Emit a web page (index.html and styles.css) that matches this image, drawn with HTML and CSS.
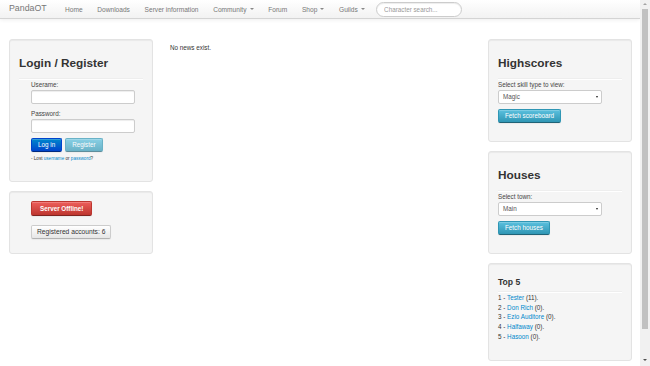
FILE: index.html
```html
<!DOCTYPE html>
<html lang="en">
<head>
  <meta charset="UTF-8">
  <meta name="viewport" content="width=device-width, initial-scale=1.0">
  <title>PandaOT</title>
  <link rel="stylesheet" href="styles.css">
</head>
<body>

  <div class="page">
    <!-- Top navigation -->
    <header class="navbar">
      <a class="brand" href="#">PandaOT</a>
      <nav class="nav-links">
        <a href="#">Home</a>
        <a href="#">Downloads</a>
        <a href="#">Server information</a>
        <a href="#">Community <span class="caret"></span></a>
        <a href="#">Forum</a>
        <a href="#">Shop <span class="caret"></span></a>
        <a href="#">Guilds <span class="caret"></span></a>
      </nav>
      <input class="search" type="text" placeholder="Character search...">
    </header>

    <div class="layout">
      <!-- Left column -->
      <aside class="sidebar">
        <div class="well">
          <h3>Login / Register</h3>
          <hr>
          <form class="login-form">
            <label>Userame:</label>
            <input class="field" type="text">
            <label>Password:</label>
            <input class="field" type="password">
            <div class="btn-row">
              <button class="btn btn-primary" type="button">Log in</button>
              <button class="btn btn-info btn-faded" type="button">Register</button>
            </div>
            <p class="lost">- Lost <a href="#">username</a> or <a href="#">password</a>?</p>
          </form>
        </div>

        <div class="well status">
          <div><button class="btn btn-danger" type="button">Server Offline!</button></div>
          <div><button class="btn btn-default" type="button">Registered accounts: 6</button></div>
        </div>
      </aside>

      <!-- News -->
      <main class="news">
        <p>No news exist.</p>
      </main>

      <!-- Right column -->
      <aside class="sidebar">
        <div class="well">
          <h3>Highscores</h3>
          <hr>
          <form class="side-form">
            <label>Select skill type to view:</label>
            <div class="select-box">Magic</div>
            <button class="btn btn-info" type="button">Fetch scoreboard</button>
          </form>
        </div>

        <div class="well">
          <h3>Houses</h3>
          <hr>
          <form class="side-form">
            <label>Select town:</label>
            <div class="select-box">Main</div>
            <button class="btn btn-info" type="button">Fetch houses</button>
          </form>
        </div>

        <div class="well">
          <h4>Top 5</h4>
          <hr>
          <ol class="top-list">
            <li>1 - <a href="#">Tester</a> (11).</li>
            <li>2 - <a href="#">Don Rich</a> (0).</li>
            <li>3 - <a href="#">Ezio Auditore</a> (0).</li>
            <li>4 - <a href="#">Halfaway</a> (0).</li>
            <li>5 - <a href="#">Hasoon</a> (0).</li>
          </ol>
        </div>
      </aside>
    </div>
  </div>

  <!-- Window scrollbar -->
  <div class="scrollbar">
    <span class="arrow arrow-up"></span>
    <span class="thumb"></span>
    <span class="arrow arrow-down"></span>
  </div>

</body>
</html>
```

FILE: styles.css
```css
body {
  font-family: 'Liberation Sans', Arial, sans-serif;
  font-size: 6.3px;
  line-height: 9.7px;
  color: #333;
  background: #fff;
  margin: 0;
  padding: 0;
  display: flex;
  height: 366px;
  overflow: hidden;
}

a {
  color: #0088cc;
  text-decoration: none;
}

.page {
  flex: 1;
  min-width: 0;
}

/* Navbar */
.navbar {
  display: flex;
  align-items: center;
  height: 18px;
  padding-left: 9px;
  background: linear-gradient(#ffffff, #f2f2f2);
  border-bottom: 1px solid #d4d4d4;
  box-shadow: 0 1px 4px rgba(0, 0, 0, 0.07);
}

.brand {
  font-size: 8.8px;
  color: #777;
  margin-right: 11px;
}

.nav-links {
  display: flex;
  padding-top: 1px;
}

.nav-links a {
  font-size: 6.6px;
  color: #777;
  padding: 0 7.35px;
  display: flex;
  align-items: center;
}

.caret {
  display: inline-block;
  width: 0;
  height: 0;
  margin-left: 3px;
  border-top: 2px solid #888;
  border-left: 2px solid transparent;
  border-right: 2px solid transparent;
}

.search {
  box-sizing: border-box;
  width: 86px;
  height: 15px;
  margin-left: 4px;
  padding: 0 7px;
  font-family: inherit;
  font-size: 6.3px;
  border: 1px solid #ccc;
  border-radius: 8px;
  background: #fff;
  box-shadow: inset 0 1px 1px rgba(0, 0, 0, 0.075);
}

.search::placeholder {
  color: #999;
}

/* Columns */
.layout {
  display: grid;
  grid-template-columns: 144px 1fr 144px;
  column-gap: 17px;
  padding: 20px 8px 0 9px;
}

.news {
  padding-top: 4px;
}

.news p {
  margin: 0;
}

/* Wells */
.well {
  background-color: #f5f5f5;
  border: 1px solid #e3e3e3;
  border-radius: 3px;
  box-shadow: inset 0 1px 1px rgba(0, 0, 0, 0.05);
  padding: 9px;
  margin-bottom: 9px;
}

.well h3 {
  font-size: 11.8px;
  line-height: 19px;
  margin: 5px 0 0;
  color: #333;
}

.well h4 {
  font-size: 8.6px;
  line-height: 8px;
  margin: 5px 0 0;
  color: #333;
}

.well hr {
  margin: 5px 0 0;
  border: 0;
  border-top: 1px solid #eee;
  border-bottom: 1px solid #fff;
}

label {
  display: block;
  line-height: 10px;
  color: #444;
}

.login-form {
  margin: 0 0 9px 12px;
}

.side-form {
  margin: 0 0 9px;
}

.field,
.select-box {
  display: block;
  box-sizing: border-box;
  width: 104px;
  height: 14px;
  margin: 0 0 5px;
  border: 1px solid #ccc;
  border-radius: 2px;
  background: #fff;
  box-shadow: inset 0 1px 1px rgba(0, 0, 0, 0.075);
}

.select-box {
  position: relative;
  padding-left: 4px;
  line-height: 12px;
  color: #555;
  box-shadow: none;
}

.select-box::after {
  content: "";
  position: absolute;
  right: 3px;
  top: 5px;
  border-top: 2px solid #222;
  border-left: 1.5px solid transparent;
  border-right: 1.5px solid transparent;
}

.btn-row {
  display: flex;
  gap: 3px;
}

/* Buttons */
.btn {
  height: 14px;
  padding: 0 6px;
  font-family: inherit;
  font-size: 6.3px;
  line-height: 12px;
  color: #fff;
  border: 1px solid rgba(0, 0, 0, 0.15);
  border-radius: 2px;
  cursor: pointer;
  box-shadow: inset 0 1px 0 rgba(255, 255, 255, 0.2), 0 1px 1px rgba(0, 0, 0, 0.05);
}

.btn-primary {
  background: linear-gradient(#0088cc, #0044cc);
  border-color: #0044cc #0044cc #002a80;
}

.btn-info {
  background: linear-gradient(#5bc0de, #2f96b4);
  border-color: #2f96b4 #2f96b4 #1f6377;
}

.btn-faded {
  opacity: 0.7;
}

.btn-danger {
  height: 15px;
  padding: 0 8px;
  font-weight: bold;
  background: linear-gradient(#ee5f5b, #bd362f);
  border-color: #bd362f #bd362f #802420;
}

.btn-default {
  padding: 0 5px;
  font-size: 6.7px;
  color: #333;
  background: linear-gradient(#ffffff, #e6e6e6);
  border-color: #ccc #ccc #b3b3b3;
}

.status {
  padding-bottom: 14px;
}

.status div {
  margin-left: 12px;
}

.status div + div {
  margin-top: 9px;
}

.lost {
  font-size: 4.6px;
  line-height: 8px;
  margin: 3px 0 0;
}

.top-list {
  list-style: none;
  margin: 0 0 9px;
  padding: 0;
}

/* Scrollbar */
.scrollbar {
  width: 10px;
  background: #f1f1f1;
  display: flex;
  flex-direction: column;
  align-items: center;
}

.arrow {
  width: 0;
  height: 0;
  border-left: 2px solid transparent;
  border-right: 2px solid transparent;
}

.arrow-up {
  margin: 3px 0 4px;
  border-bottom: 2px solid #a3a3a3;
}

.arrow-down {
  margin: 30px 0 3px;
  border-top: 2px solid #505050;
}

.thumb {
  width: 6px;
  height: 320px;
  background: #c1c1c1;
}
```
